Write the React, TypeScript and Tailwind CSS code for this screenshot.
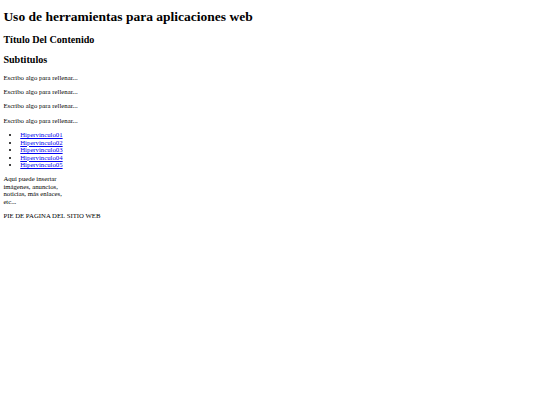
import React from 'react';

const links = ['Hipervinculo01', 'Hipervinculo02', 'Hipervinculo03', 'Hipervinculo04', 'Hipervinculo05'];

export default function App() {
  return (
    <div className="bg-white text-black min-h-screen px-[3.375px] pb-[3.375px] font-['Liberation_Serif','Times_New_Roman',serif] text-[6.75px] leading-[7.6px]">
      <header>
        <h1 className="text-[13.5px] font-bold my-[9.05px] leading-[15.5px]">Uso de herramientas para aplicaciones web</h1>
      </header>

      <main>
        <h2 className="text-[10.125px] font-bold my-[8.4px] leading-[11.64px]">Título Del Contenido</h2>
        <h2 className="text-[10.125px] font-bold my-[8.4px] leading-[11.64px]">Subtitulos</h2>
        {[0, 1, 2, 3].map((i) => (
          <p key={i} className="my-[6.75px]">Escribo algo para rellenar...</p>
        ))}
      </main>

      <nav>
        <ul className="list-disc pl-[16.875px] my-[6.75px]">
          {links.map((l) => (
            <li key={l} className="h-[7.5px] leading-[7.5px]">
              <a href="#" className="text-[#0000ee] underline">{l}</a>
            </li>
          ))}
        </ul>
      </nav>

      <aside className="w-[64px] my-[6.75px]">
        Aquí puede insertar imágenes, anuncios, noticias, más enlaces, etc...
      </aside>

      <footer className="my-[6.75px]">PIE DE PAGINA DEL SITIO WEB</footer>
    </div>
  );
}
